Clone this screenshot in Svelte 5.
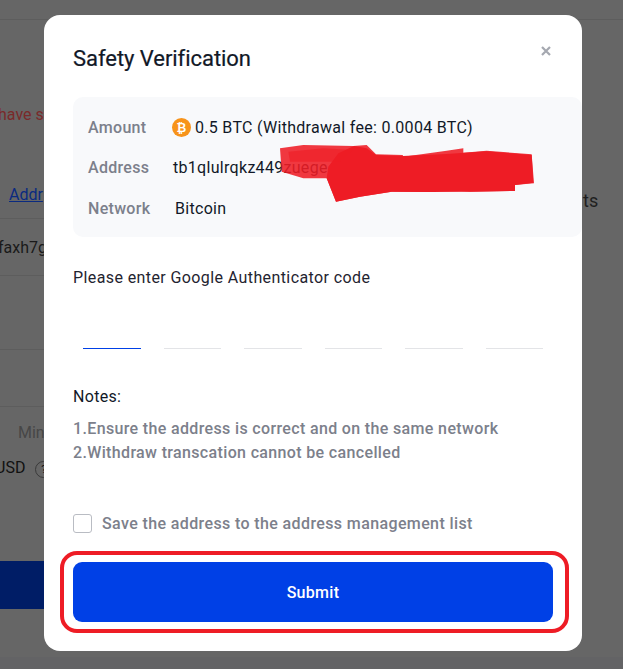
<script>
	let digits = [0, 1, 2, 3, 4, 5];
</script>

<div class="page">
	<div class="line first"></div>
	<div class="back-left">
		<div class="warn">You have s</div>
		<div class="tabs"><span class="link">Addr</span></div>
		<div class="line"></div>
		<div class="hash">faxh7g</div>
		<div class="line"></div>
		<div class="spacer1"></div>
		<div class="line"></div>
		<div class="spacer2"></div>
		<div class="line"></div>
		<div class="min">Min</div>
		<div class="usd">USD <span class="help">?</span></div>
		<div class="cta"></div>
	</div>
	<div class="strip"></div>
</div>
<div class="side-text">ts</div>

<div class="modal">
	<button class="close" aria-label="Close">
		<svg width="10" height="10" viewBox="0 0 10 10"><path d="M1 1l8 8M9 1l-8 8" stroke="#a5a8b0" stroke-width="2.2" fill="none" /></svg>
	</button>
	<h2>Safety Verification</h2>

	<div class="info">
		<div class="row">
			<span class="label">Amount</span>
			<span class="value coin">
				<svg class="btc" width="19" height="19" viewBox="0 0 19 19">
					<circle cx="9.5" cy="9.5" r="9.5" fill="#f7931a" />
					<text x="9.5" y="13.6" text-anchor="middle" font-size="12" font-weight="700" fill="#fff" font-family="Roboto, sans-serif">₿</text>
				</svg>
				0.5 BTC (Withdrawal fee: 0.0004 BTC)
			</span>
		</div>
		<div class="row">
			<span class="label">Address</span>
			<span class="value addr">tb1qlulrqkz449zuege</span>
		</div>
		<div class="row">
			<span class="label">Network</span>
			<span class="value net">Bitcoin</span>
		</div>
	</div>

	<p class="prompt">Please enter Google Authenticator code</p>

	<div class="code">
		{#each digits as d}
			<div class="digit" class:active={d === 0}></div>
		{/each}
	</div>

	<div class="notes-title">Notes:</div>
	<div class="notes">
		<div>1.Ensure the address is correct and on the same network</div>
		<div>2.Withdraw transcation cannot be cancelled</div>
	</div>

	<label class="save">
		<span class="box"></span>
		Save the address to the address management list
	</label>

	<button class="submit">Submit</button>
</div>

<!-- hand drawn marks on top of the screenshot -->
<svg class="scribble" width="353" height="220" viewBox="0 0 1059 660">
	<path fill="#ee1c25" fill-opacity="0.88" d="M30 385L100 375L250 378L290 375L318 403L398 405L400 410L530 392L580 385L580 398L650 392L785 403L792 490L735 495L735 513L600 515L540 510L480 516L365 515L270 530L198 545L170 475L100 475L35 455Z" />
	<path fill="#ee1c25" d="M175 440L205 400L252 378L290 385L318 405L398 408L530 402L650 394L785 405L790 488L735 495L735 513L600 515L480 516L365 515L270 530L198 545L170 475Z" />
	<path fill="#ee1c25" fill-opacity="0.6" d="M55 395L160 385L250 390L210 425L60 425Z" />
</svg>
<div class="ring"></div>

<style>
	:global(body) {
		margin: 0;
		background: #666666;
		font-family: Roboto, "Liberation Sans", sans-serif;
		overflow: hidden;
	}
	.page {
		height: 669px;
		display: flex;
		flex-direction: column;
		overflow: hidden;
		color: #1a1a1a;
		font-size: 16px;
	}
	.back-left {
		flex: 1;
		width: 44px;
		white-space: nowrap;
		overflow: hidden;
	}
	.line {
		flex: none;
		height: 1px;
		background: #5d5d5d;
	}
	.first {
		margin-top: 19px;
	}
	.warn {
		margin-top: 85px;
		line-height: 19px;
		margin-left: -33px;
		color: #7a2a2a;
	}
	.tabs {
		margin-top: 61px;
		line-height: 19px;
		padding-left: 9px;
		margin-bottom: 14px;
	}
	.link {
		color: #0a2a80;
		text-decoration: underline;
	}
	.hash {
		margin-top: 19px;
		line-height: 19px;
		margin-bottom: 18px;
		margin-left: -2px;
	}
	.spacer1 {
		height: 73px;
	}
	.spacer2 {
		height: 56px;
	}
	.min {
		margin-top: 16px;
		padding-left: 18px;
		line-height: 19px;
		color: #474747;
	}
	.usd {
		margin-top: 16px;
		margin-left: -5px;
		line-height: 19px;
		color: #111;
		font-size: 16px;
	}
	.help {
		display: inline-block;
		width: 15px;
		height: 15px;
		margin-left: 6px;
		border: 1px solid #3a3a3a;
		border-radius: 50%;
		text-align: center;
		font-size: 11px;
		line-height: 15px;
	}
	.cta {
		margin-top: 83px;
		height: 48px;
		background: #001d66;
	}
	.strip {
		flex: none;
		height: 12px;
		background: #636365;
	}
	.side-text {
		position: absolute;
		left: 583px;
		top: 191px;
		font-size: 18px;
		line-height: 20px;
		color: #1f1f1f;
	}
	.modal {
		position: absolute;
		left: 44px;
		top: 15px;
		width: 538px;
		height: 636px;
		box-sizing: border-box;
		padding: 29px 0 0 29px;
		background: #fff;
		border-radius: 16px;
		color: #111827;
		font-size: 16px;
		letter-spacing: 0.3px;
	}
	.close {
		position: absolute;
		top: 31px;
		left: 497px;
		padding: 0;
		border: 0;
		background: none;
		line-height: 0;
	}
	h2 {
		margin: 0;
		font-size: 22px;
		font-weight: 400;
		line-height: 30px;
		letter-spacing: -0.05px;
		-webkit-text-stroke: 0.2px #111827;
	}
	.info {
		margin-top: 23px;
		height: 140px;
		box-sizing: border-box;
		padding: 10px 0 0 15px;
		background: #f8f9fb;
		border-radius: 10px;
	}
	.row {
		display: flex;
		align-items: center;
		height: 40.5px;
	}
	.label {
		width: 85px;
		color: #7c808b;
		font-weight: 500;
	}
	.value {
		white-space: nowrap;
	}
	.coin {
		display: flex;
		align-items: center;
		gap: 4px;
		margin-left: -1px;
	}
	.net {
		margin-left: 2px;
	}
	.prompt {
		margin: 31px 0 0;
		line-height: 19px;
		color: #1f2430;
		letter-spacing: 0.4px;
	}
	.code {
		margin-top: 61px;
		padding-left: 10px;
		display: flex;
		gap: 23px;
	}
	.digit {
		width: 57.5px;
		height: 1px;
		background: #e3e4e7;
	}
	.digit.active {
		background: #0040e6;
	}
	.notes-title {
		margin-top: 38px;
		line-height: 19px;
	}
	.notes {
		margin-top: 11px;
		line-height: 24px;
		color: #7c808b;
		font-weight: 500;
		letter-spacing: 0.35px;
	}
	.save {
		display: flex;
		align-items: center;
		gap: 10px;
		margin-top: 48px;
		height: 20px;
		color: #7c808b;
		font-weight: 500;
		letter-spacing: 0.38px;
	}
	.box {
		width: 19px;
		height: 19px;
		box-sizing: border-box;
		border: 1.5px solid #b9bcc3;
		border-radius: 3px;
	}
	.submit {
		display: block;
		width: 480px;
		height: 60px;
		margin-top: 29px;
		padding: 0;
		border: 0;
		border-radius: 9px;
		background: #0040e6;
		color: #fff;
		font: 500 16px Roboto, sans-serif;
		letter-spacing: 0.3px;
	}
	.scribble {
		position: absolute;
		left: 270px;
		top: 20px;
		pointer-events: none;
	}
	.ring {
		position: absolute;
		left: 60px;
		top: 551px;
		width: 509px;
		height: 82px;
		box-sizing: border-box;
		border: 4.5px solid #ee1c25;
		border-radius: 17px;
		pointer-events: none;
	}
</style>
